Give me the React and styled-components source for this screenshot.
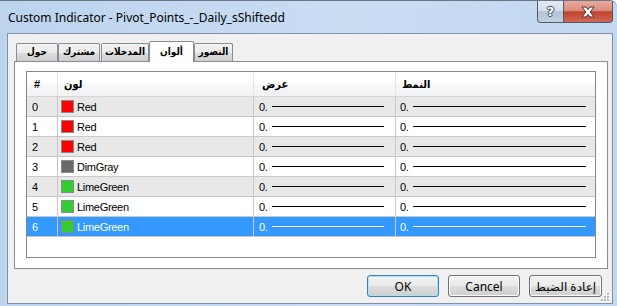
import React from 'react';
import styled, { createGlobalStyle } from 'styled-components';

const GlobalStyle = createGlobalStyle`
  html, body {
    margin: 0;
    padding: 0;
    background: #ffffff;
  }
  body {
    width: 617px;
    height: 306px;
    overflow: hidden;
  }
`;

const uiFont = `"Liberation Sans", "DejaVu Sans", sans-serif`;
const tabFont = `"Liberation Sans", "DejaVu Sans Condensed", "DejaVu Sans", sans-serif`;
const titleFont = `"Noto Sans", "DejaVu Sans", sans-serif`;

const rows = [
  { id: 0, name: 'Red', color: '#ff0000' },
  { id: 1, name: 'Red', color: '#ff0000' },
  { id: 2, name: 'Red', color: '#ff0000' },
  { id: 3, name: 'DimGray', color: '#696969' },
  { id: 4, name: 'LimeGreen', color: '#32cd32' },
  { id: 5, name: 'LimeGreen', color: '#32cd32' },
  { id: 6, name: 'LimeGreen', color: '#32cd32' },
];

const tabs = [
  { label: 'حول', width: 42, gap: 0 },
  { label: 'مشترك', width: 42, gap: 0 },
  { label: 'المدخلات', width: 48, gap: 1 },
  { label: 'ألوان', width: 45, gap: 0, active: true },
  { label: 'التصور', width: 39, gap: 0 },
];

const Window = styled.div`
  width: 617px;
  height: 306px;
  box-sizing: border-box;
  display: flex;
  flex-direction: column;
  background: linear-gradient(to right, #bcd4ee 0%, #c9ddf3 55%, #c3d9f1 100%);
  border-top: 1px solid #6b7785;
  border-top-right-radius: 7px;
  overflow: hidden;
`;

const TitleBar = styled.div`
  height: 32px;
  display: flex;
  align-items: flex-start;
  padding-left: 8px;
  flex-shrink: 0;
`;

const Title = styled.div`
  margin-top: 9px;
  font-family: ${titleFont};
  font-size: 12px;
  line-height: 15px;
  color: #000;
  white-space: nowrap;
`;

const CaptionGroup = styled.div`
  margin-left: auto;
  margin-right: 4px;
  display: flex;
`;

const CaptionButton = styled.div`
  width: ${p => p.$w}px;
  height: 22px;
  box-sizing: border-box;
  border: 1px solid #4b5a6e;
  border-top: none;
  display: flex;
  align-items: center;
  justify-content: center;
  background: ${p => p.$close
    ? 'linear-gradient(to bottom, #e8aa9d 0%, #d98d7d 45%, #c4402d 52%, #cf6a57 100%)'
    : 'linear-gradient(to bottom, #e4eaf2 0%, #d5dde8 45%, #b3c2d4 52%, #c6d2df 100%)'};
  border-radius: ${p => p.$close ? '0 0 4px 0' : '0 0 0 4px'};
  border-left: ${p => p.$close ? 'none' : '1px solid #4b5a6e'};
`;

const HelpGlyph = styled.span`
  font-family: "DejaVu Sans", sans-serif;
  font-weight: bold;
  font-size: 13px;
  line-height: 13px;
  color: #ffffff;
  text-shadow: 1px 0 0 #3d4b5e, -1px 0 0 #3d4b5e, 0 1px 0 #3d4b5e, 0 -1px 0 #3d4b5e;
`;

const Client = styled.div`
  flex: 1;
  position: relative;
  margin: 0 4px 2px 7px;
  border: 1px solid #8192a8;
  background: #f0f0f0;
  padding: 7px 4px 0 6px;
  display: flex;
  flex-direction: column;
`;

const TabStrip = styled.div`
  height: 20px;
  display: flex;
  align-items: flex-end;
  padding-left: 2px;
`;

const Tab = styled.div`
  width: ${p => p.$w}px;
  margin-left: ${p => p.$gap}px;
  height: ${p => p.$active ? 21 : 18}px;
  margin-bottom: ${p => p.$active ? -1 : 0}px;
  position: relative;
  z-index: ${p => p.$active ? 1 : 0};
  box-sizing: border-box;
  border: 1px solid #898c95;
  border-bottom: none;
  border-radius: 2px 2px 0 0;
  background: ${p => p.$active
    ? '#ffffff'
    : 'linear-gradient(to bottom, #f3f3f3 0%, #ebebeb 50%, #dddddd 51%, #cfcfcf 100%)'};
  padding: ${p => p.$active ? '3px 0 0 0' : '1px 0 0 0'};
  text-align: center;
  overflow: hidden;
  font-family: ${tabFont};
  font-weight: bold;
  font-size: 10px;
  line-height: 14px;
  color: #000;
  white-space: nowrap;
`;

const Panel = styled.div`
  width: 594px;
  height: 208px;
  box-sizing: border-box;
  border: 1px solid #898c95;
  background: #ffffff;
  padding: 9px 11px 10px 11px;
  display: flex;
`;

const List = styled.div`
  flex: 1;
  border: 1px solid #828790;
  background: #ffffff;
  overflow: hidden;
`;

const Cols = `
  display: grid;
  grid-template-columns: 31px 196px 142px 1fr;
`;

const HeadRow = styled.div`
  ${Cols}
  height: 25px;
  box-sizing: border-box;
  border-bottom: 1px solid #d5d5d5;
  background: linear-gradient(to bottom, #ffffff 0%, #ffffff 50%, #f7f8f9 51%, #f1f2f4 100%);
`;

const HeadCell = styled.div`
  display: flex;
  align-items: center;
  padding-left: ${p => p.$pad}px;
  border-right: ${p => p.$last ? 'none' : '1px solid #e3e4e6'};
  font-family: ${tabFont};
  font-weight: bold;
  font-size: 11px;
  color: #000;
`;

const Row = styled.div`
  ${Cols}
  height: 20px;
  box-sizing: border-box;
  border-bottom: 1px solid #c8c8c8;
  background: ${p => p.$selected ? '#3399ff' : p.$alt ? '#e8e8e8' : '#ffffff'};
  color: ${p => p.$selected ? '#ffffff' : '#000000'};
`;

const Cell = styled.div`
  display: flex;
  align-items: center;
  padding-left: ${p => p.$pad}px;
  padding-right: ${p => p.$padR || 0}px;
  border-right: ${p => p.$last ? 'none' : '1px solid #c8c8c8'};
  font-family: ${uiFont};
  font-size: 11px;
  letter-spacing: -0.3px;
  white-space: nowrap;
  overflow: hidden;
`;

const Swatch = styled.span`
  width: 13px;
  height: 13px;
  box-sizing: border-box;
  border: 1px solid #8a8a8a;
  background: ${p => p.$color};
  margin-right: 3px;
  flex-shrink: 0;
`;

const LineSample = styled.span`
  flex: 1;
  height: 1px;
  margin-left: 4px;
  background: currentColor;
`;

const ButtonRow = styled.div`
  display: flex;
  justify-content: flex-end;
  gap: 9px;
  padding-top: 6px;
  margin-right: 6px;
`;

const Button = styled.button`
  width: ${p => p.$w}px;
  height: 22px;
  box-sizing: border-box;
  padding: 0;
  border: 1px solid ${p => p.$default ? '#3c7fb1' : '#707070'};
  border-radius: 3px;
  background: linear-gradient(to bottom, #f2f2f2 0%, #ebebeb 50%, #dddddd 51%, #cfcfcf 100%);
  box-shadow: ${p => p.$default ? 'inset 0 0 0 1px #a8e3f7' : 'inset 0 0 0 1px #fbfbfb'};
  font-family: ${titleFont};
  font-size: 12px;
  color: #000;
`;

const Grip = styled.svg`
  position: absolute;
  right: 2px;
  bottom: 1px;
`;

const CloseIcon = () => (
  <svg width="16" height="12" viewBox="0 0 16 12">
    <path
      d="M2 1 H6 L8 3.5 L10 1 H14 L10.2 6 L14 11 H10 L8 8.5 L6 11 H2 L5.8 6 Z"
      fill="#ffffff"
      stroke="#4a2b26"
      strokeWidth="1"
      strokeLinejoin="round"
    />
  </svg>
);

const GripIcon = () => (
  <Grip width="9" height="9" viewBox="0 0 9 9">
    {[[6, 0], [3, 3], [6, 3], [0, 6], [3, 6], [6, 6]].map(([x, y]) => (
      <g key={`${x}-${y}`}>
        <rect x={x + 1} y={y + 1} width="2" height="2" fill="#ffffff" />
        <rect x={x} y={y} width="2" height="2" fill="#b8b8b8" />
      </g>
    ))}
  </Grip>
);

const App = () => {
  return (
    <>
      <GlobalStyle />
      <Window>
        <TitleBar>
          <Title>Custom Indicator - Pivot_Points_-_Daily_sShiftedd</Title>
          <CaptionGroup>
            <CaptionButton $w={27}>
              <HelpGlyph>?</HelpGlyph>
            </CaptionButton>
            <CaptionButton $w={49} $close>
              <CloseIcon />
            </CaptionButton>
          </CaptionGroup>
        </TitleBar>
        <Client>
          <TabStrip>
            {tabs.map(t => (
              <Tab key={t.label} $w={t.width} $gap={t.gap} $active={t.active}>
                {t.label}
              </Tab>
            ))}
          </TabStrip>
          <Panel>
            <List>
              <HeadRow>
                <HeadCell $pad={7}>#</HeadCell>
                <HeadCell $pad={6}>لون</HeadCell>
                <HeadCell $pad={8}>عرض</HeadCell>
                <HeadCell $pad={6} $last>النمط</HeadCell>
              </HeadRow>
              {rows.map(r => (
                <Row key={r.id} $alt={r.id % 2 === 0} $selected={r.id === 6}>
                  <Cell $pad={5}>{r.id}</Cell>
                  <Cell $pad={3}>
                    <Swatch $color={r.color} />
                    {r.name}
                  </Cell>
                  <Cell $pad={5} $padR={11}>
                    0.
                    <LineSample />
                  </Cell>
                  <Cell $pad={4} $padR={9} $last>
                    0.
                    <LineSample />
                  </Cell>
                </Row>
              ))}
            </List>
          </Panel>
          <ButtonRow>
            <Button $w={72} $default>OK</Button>
            <Button $w={72}>Cancel</Button>
            <Button $w={73}>إعادة الضبط</Button>
          </ButtonRow>
          <GripIcon />
        </Client>
      </Window>
    </>
  );
};

export default App;
